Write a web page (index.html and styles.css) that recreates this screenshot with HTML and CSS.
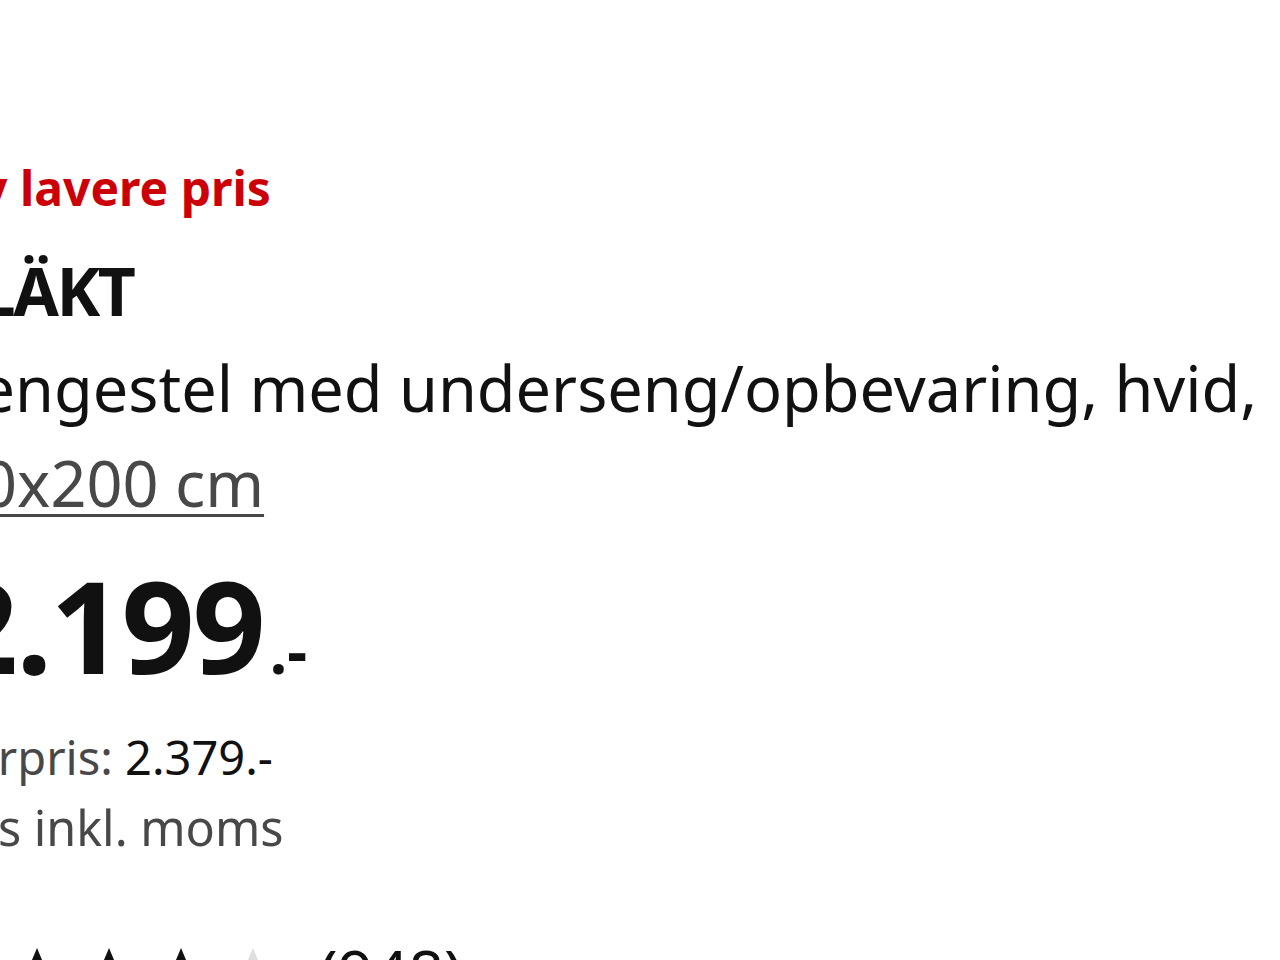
FILE: index.html
```html
<!DOCTYPE html>
<html lang="da">
<head>
    <meta charset="UTF-8">
    <meta name="viewport" content="width=device-width, initial-scale=1.0">
    <title>SLÄKT sengestel</title>
    <link rel="stylesheet" href="styles.css">
</head>
<body>
    <div class="product">
        <div class="badge">Ny lavere pris</div>
        <h1 class="name">SLÄKT</h1>
        <div class="desc">Sengestel med underseng/opbevaring, hvid, <a class="size" href="#">90x200 cm</a></div>
        <div class="price">2.199<span class="price-end">.-</span></div>
        <div class="before"><span class="label">Førpris:</span> 2.379.-</div>
        <div class="vat">Pris inkl. moms</div>
        <div class="rating">
            <svg class="star" viewBox="0 0 24 24"><path d="M12 2l2.9 6.9 7.1.6-5.4 4.7 1.7 7.3L12 17.6 5.7 21.5l1.7-7.3L2 9.5l7.1-.6z"/></svg>
            <svg class="star" viewBox="0 0 24 24"><path d="M12 2l2.9 6.9 7.1.6-5.4 4.7 1.7 7.3L12 17.6 5.7 21.5l1.7-7.3L2 9.5l7.1-.6z"/></svg>
            <svg class="star" viewBox="0 0 24 24"><path d="M12 2l2.9 6.9 7.1.6-5.4 4.7 1.7 7.3L12 17.6 5.7 21.5l1.7-7.3L2 9.5l7.1-.6z"/></svg>
            <svg class="star" viewBox="0 0 24 24"><path d="M12 2l2.9 6.9 7.1.6-5.4 4.7 1.7 7.3L12 17.6 5.7 21.5l1.7-7.3L2 9.5l7.1-.6z"/></svg>
            <svg class="star empty" viewBox="0 0 24 24"><path d="M12 2l2.9 6.9 7.1.6-5.4 4.7 1.7 7.3L12 17.6 5.7 21.5l1.7-7.3L2 9.5l7.1-.6z"/></svg>
            <span class="count">(948)</span>
        </div>
    </div>
</body>
</html>
```

FILE: styles.css
```css
body{
    margin: 0;
    background: #fff;
    color: #111;
    font-family: "Noto Sans", "Open Sans", sans-serif;
    overflow: hidden;
}
.product{
    margin-left: -55px;
    padding-top: 156px;
}
.badge{
    margin-left: -4px;
    color: #cc0008;
    font-size: 48px;
    font-weight: 700;
    line-height: 64px;
}
.name{
    margin: 26px 0 0 0;
    font-size: 66px;
    font-weight: 700;
    line-height: 88px;
    letter-spacing: -2.5px;
}
.desc{
    margin-top: 6px;
    font-size: 63px;
    line-height: 95px;
}
.size{
    color: #484848;
    text-decoration: underline;
    text-decoration-thickness: 3px;
    text-underline-offset: 7px;
}
.price{
    margin-top: 31px;
    font-size: 128px;
    font-weight: 700;
    line-height: 128px;
    letter-spacing: -2px;
}
.price-end{
    margin-left: 6px;
    font-size: 62px;
    letter-spacing: 0;
}
.before{
    margin-top: 8px;
    font-size: 47px;
    line-height: 70px;
}
.label{
    color: #484848;
}
.vat{
    margin-left: -9px;
    color: #484848;
    font-size: 48.5px;
    line-height: 70px;
}
.rating{
    display: flex;
    align-items: flex-start;
    gap: 12px;
    margin-top: 83px;
    margin-left: -10px;
}
.star{
    width: 60px;
    height: 60px;
    fill: #111;
    margin-top: -2px;
}
.star.empty{
    fill: #dfdfdf;
}
.count{
    margin: -4px 0 0 24px;
    font-size: 62px;
    line-height: 60px;
}
```
